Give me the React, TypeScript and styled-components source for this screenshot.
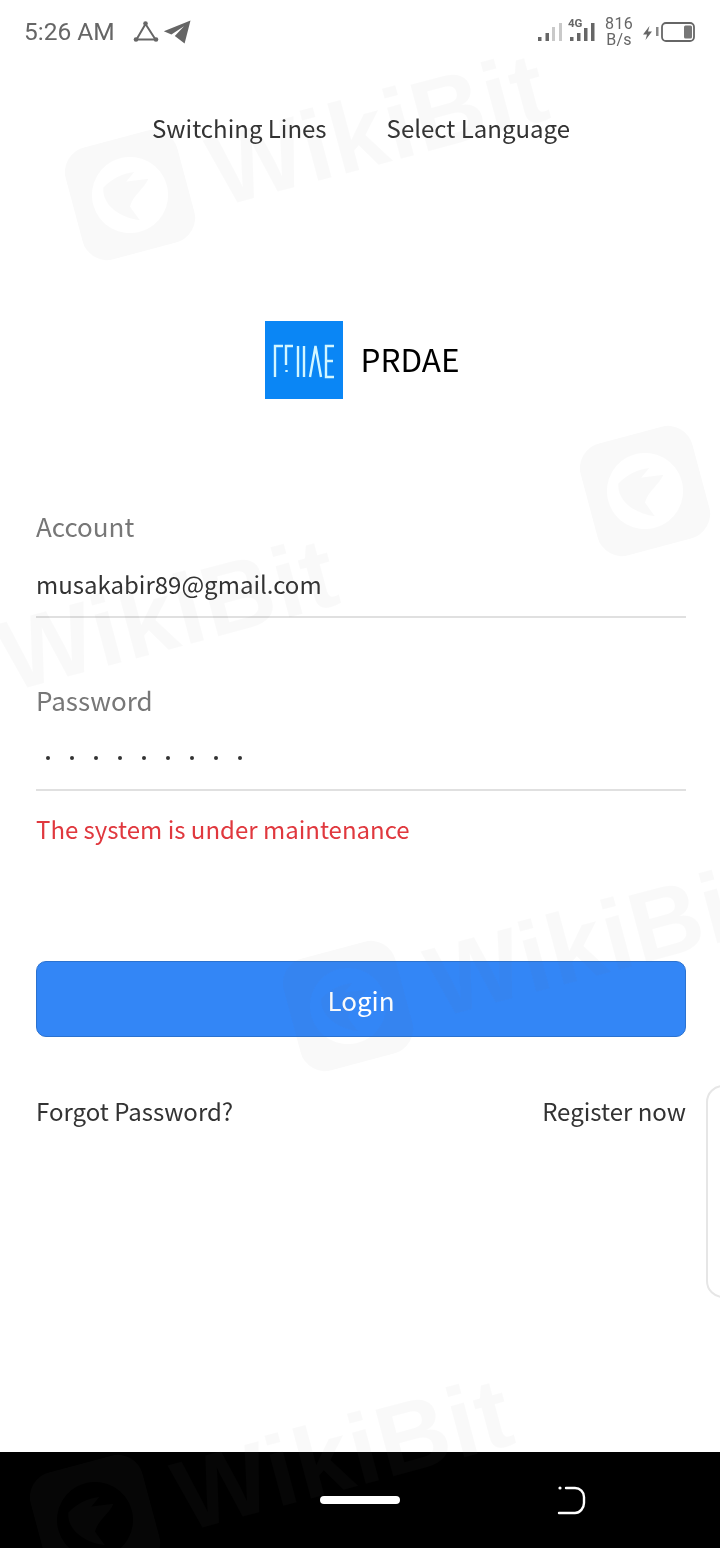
import styled, { createGlobalStyle } from "styled-components";

const GlobalStyle = createGlobalStyle`
  html, body {
    margin: 0;
    padding: 0;
    background: #fff;
  }
  * {
    box-sizing: border-box;
  }
`;

const sans = `"Noto Sans CJK SC", "Noto Sans", sans-serif`;

const Page = styled.div`
  position: relative;
  width: 720px;
  height: 1548px;
  overflow: hidden;
  display: flex;
  flex-direction: column;
  background: #fff;
  font-family: ${sans};
`;

const StatusBar = styled.div`
  height: 64px;
  flex: none;
  display: flex;
  align-items: center;
  justify-content: space-between;
  padding: 0 25px 0 24px;
  color: #666;
`;

const StatusGroup = styled.div<{ $gap: number }>`
  display: flex;
  align-items: center;
  gap: ${(p) => p.$gap}px;
`;

const Clock = styled.span`
  font-family: Roboto, sans-serif;
  font-size: 24.5px;
  line-height: 28px;
`;

const Speed = styled.div`
  display: flex;
  flex-direction: column;
  align-items: center;
  font-family: Roboto, sans-serif;
  font-size: 16px;
  line-height: 16.5px;
  letter-spacing: 0.3px;
`;

const Content = styled.main`
  flex: 1;
  padding: 0 34px 0 36px;
  display: flex;
  flex-direction: column;
`;

const TopLinks = styled.nav`
  display: flex;
  justify-content: center;
  gap: 60px;
  margin-top: 45px;
  color: #333;
  font-size: 24px;
  line-height: 38px;
`;

const Brand = styled.div`
  display: flex;
  align-items: center;
  justify-content: center;
  gap: 18px;
  margin-top: 174px;
  padding-left: 2px;
`;

const LogoBox = styled.div`
  width: 78px;
  height: 78px;
  background: #0a86f5;
  display: flex;
  align-items: center;
  justify-content: center;
`;

const BrandName = styled.span`
  align-self: flex-start;
  font-size: 31.5px;
  line-height: 74px;
  color: #000;
`;

const Field = styled.div<{ $top: number }>`
  margin-top: ${(p) => p.$top}px;
  border-bottom: 2px solid #e0e0e0;
`;

const FieldLabel = styled.div`
  color: #777;
  font-size: 26px;
  line-height: 40px;
`;

const FieldValue = styled.div`
  margin-top: 18px;
  height: 52px;
  color: #333;
  font-size: 24px;
  line-height: 40px;
`;

const PasswordDots = styled.div`
  margin-top: 19px;
  height: 50px;
  display: flex;
  gap: 20px;
  padding: 17px 0 0 10px;
`;

const PasswordDot = styled.i`
  width: 4px;
  height: 4px;
  border-radius: 50%;
  background: #333;
`;

const ErrorText = styled.div`
  margin-top: 18px;
  color: #e0383e;
  font-size: 24px;
  line-height: 40px;
`;

const LoginButton = styled.button`
  margin-top: 112px;
  height: 76px;
  width: 100%;
  border: 1px solid #2b72d0;
  border-radius: 10px;
  background: #3386f6;
  color: #fff;
  font-family: ${sans};
  font-size: 26px;
  padding: 0;
`;

const Links = styled.div`
  margin-top: 55px;
  display: flex;
  justify-content: space-between;
  color: #333;
  font-size: 24px;
  line-height: 38px;
`;

const SideTab = styled.div`
  position: absolute;
  right: -20px;
  top: 1085px;
  width: 34px;
  height: 213px;
  border: 2px solid #e6e6e6;
  border-radius: 20px;
  background: #fff;
`;

const NavBar = styled.div`
  height: 96px;
  flex: none;
  background: #000;
  display: flex;
  align-items: center;
  justify-content: center;
  position: relative;
`;

const HomePill = styled.div`
  width: 80px;
  height: 8px;
  border-radius: 4px;
  background: #fff;
`;

const BackIcon = styled.svg`
  position: absolute;
  left: 556px;
  top: 33px;
`;

const Mark = styled.div<{ $x: number; $y: number }>`
  position: absolute;
  left: ${(p) => p.$x}px;
  top: ${(p) => p.$y}px;
  display: flex;
  align-items: center;
  gap: 26px;
  transform: rotate(-15deg);
  transform-origin: 0 50%;
  pointer-events: none;
  color: rgba(255, 255, 255, 0.022);
  mix-blend-mode: difference;
`;

const MarkText = styled.span`
  font-family: "Liberation Sans", sans-serif;
  font-weight: 700;
  font-size: 100px;
  line-height: 116px;
  letter-spacing: 1px;
  white-space: nowrap;
`;

const WikiMark = ({ x, y, bare }: { x: number; y: number; bare?: boolean }) => (
  <Mark $x={x} $y={y}>
    <svg width="116" height="116" viewBox="0 0 116 116">
      <path
        fillRule="evenodd"
        fill="currentColor"
        d="M26 0h64a26 26 0 0 1 26 26v64a26 26 0 0 1-26 26H26A26 26 0 0 1 0 90V26A26 26 0 0 1 26 0z
           M58 20a38 38 0 1 0 0 76a38 38 0 1 0 0-76z
           M34 44c10-6 22-9 34-7l-10 7 22 3c-7 9-18 11-25 22l6 16C44 78 28 62 34 44z"
      />
    </svg>
    {!bare && <MarkText>WikiBit</MarkText>}
  </Mark>
);

const NetworkIcon = () => (
  <svg width="26" height="24" viewBox="0 0 26 24" fill="none" stroke="#666" strokeWidth="2">
    <path d="M12.5 4 3.5 19.5h19L12.5 4z" strokeLinejoin="round" />
    <circle cx="12.5" cy="3.5" r="2.3" fill="#666" stroke="none" />
    <circle cx="3" cy="19.5" r="2.3" fill="#666" stroke="none" />
    <circle cx="23" cy="19.5" r="2.3" fill="#666" stroke="none" />
  </svg>
);

const PlaneIcon = () => (
  <svg width="28" height="24" viewBox="0 0 28 24">
    <path d="M27.500.5 .8 11.200l7.600 3.200L21 6.200 11.800 16l9.800 7.500L27.500.5z" fill="#666" />
  </svg>
);

const SignalIcon = () => (
  <svg width="58" height="36" viewBox="0 0 58 36">
    <g fill="#666">
      <rect x="1" y="23" width="3.500" height="4" />
      <rect x="8.500" y="19" width="3.500" height="8" />
    </g>
    <g fill="#c9c9c9">
      <rect x="15" y="13" width="3" height="14" />
      <rect x="22" y="9" width="3" height="18" />
    </g>
    <g fill="#666">
      <rect x="33" y="23" width="3.500" height="4" />
      <rect x="40" y="19" width="3.500" height="8" />
      <rect x="47" y="14" width="3.500" height="13" />
      <rect x="54" y="9" width="3.500" height="18" />
    </g>
    <text x="31" y="13" fontFamily="Roboto, sans-serif" fontWeight="700" fontSize="11.500" fill="#666">
      4G
    </text>
  </svg>
);

const BatteryIcon = () => (
  <svg width="52" height="24" viewBox="0 0 52 24" fill="none">
    <path d="M6.500 6 0 14.500h4L2.500 20 9 11.500H5L6.500 6z" fill="#666" />
    <rect x="13" y="7" width="2.500" height="9" fill="#888" />
    <rect x="19" y="3" width="32" height="18" rx="4" stroke="#666" strokeWidth="1.800" />
    <rect x="41" y="5.500" width="8" height="13" rx="1.500" fill="#777" />
  </svg>
);

const LogoGlyph = () => (
  <svg width="78" height="50" viewBox="0 0 78 50" fill="none" stroke="#d2f6ff" strokeWidth="2.400">
    <path d="M10 42V11h8" />
    <path d="M21 30V11h7" />
    <path d="M21.500 35v2" />
    <path d="M33 11v31" />
    <path d="M39 11v31" />
    <path d="M45 42 50.500 11 56 42" />
    <path d="M69 11h-8v31h8M61 26h7" />
  </svg>
);

const App = () => (
  <Page>
    <GlobalStyle />
    <StatusBar>
      <StatusGroup $gap={18}>
        <Clock>5:26 AM</Clock>
        <StatusGroup $gap={4}>
          <NetworkIcon />
          <PlaneIcon />
        </StatusGroup>
      </StatusGroup>
      <StatusGroup $gap={10}>
        <SignalIcon />
        <Speed>
          <span>816</span>
          <span>B/s</span>
        </Speed>
        <BatteryIcon />
      </StatusGroup>
    </StatusBar>
    <Content>
      <TopLinks>
        <span>Switching Lines</span>
        <span>Select Language</span>
      </TopLinks>
      <Brand>
        <LogoBox>
          <LogoGlyph />
        </LogoBox>
        <BrandName>PRDAE</BrandName>
      </Brand>
      <Field $top={107}>
        <FieldLabel>Account</FieldLabel>
        <FieldValue>musakabir89@gmail.com</FieldValue>
      </Field>
      <Field $top={62}>
        <FieldLabel>Password</FieldLabel>
        <PasswordDots>
          {Array.from({ length: 9 }, (_, i) => (
            <PasswordDot key={i} />
          ))}
        </PasswordDots>
      </Field>
      <ErrorText>The system is under maintenance</ErrorText>
      <LoginButton>Login</LoginButton>
      <Links>
        <span>Forgot Password?</span>
        <span>Register now</span>
      </Links>
    </Content>
    <SideTab />
    <NavBar>
      <HomePill />
      <BackIcon width="32" height="34" viewBox="0 0 32 34" fill="none">
        <circle cx="4" cy="3" r="1.600" fill="#fff" />
        <path
          d="M10 3h9c5 0 9 4 9 9v6c0 5-4 10-9 10H3"
          stroke="#fff"
          strokeWidth="2.400"
          strokeLinecap="round"
        />
      </BackIcon>
    </NavBar>
    <WikiMark x={74} y={152} />
    <WikiMark x={589} y={448} bare />
    <WikiMark x={-136} y={637} />
    <WikiMark x={292} y={963} />
    <WikiMark x={39} y={1477} />
  </Page>
);

export default App;
